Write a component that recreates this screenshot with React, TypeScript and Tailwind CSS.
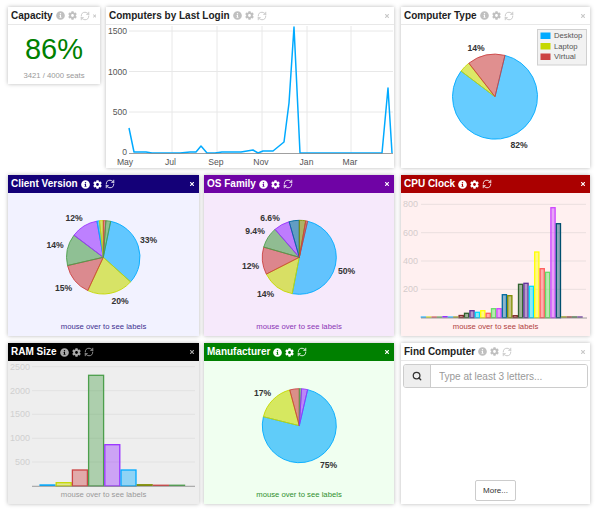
import type { ReactNode } from "react";
import { FaInfoCircle, FaCog, FaTimes } from "react-icons/fa";
import { RefreshCw, Search } from "lucide-react";

const BLUE = "#00aaff", LIME = "#c5d800", RED = "#cc4444", GREEN = "#4c9f4c", PURPLE = "#9933ff";
const DBLUE = "#006a9f", OLIVE = "#7f8c00", DRED = "#802b2b", DGREEN = "#2f632f", DPURPLE = "#5f2f99";
const CYAN = "#00ddff", YELLOW = "#ffff00", PINK = "#ff5c5c", LGREEN = "#66dd66", BPURPLE = "#cc44ff", TEAL = "#004f6f";

function Card({ title, header, iconClass, closeClass, bodyBg, className, children }: {
  title: string; header: string; iconClass: string; closeClass: string; bodyBg: string; className: string; children: ReactNode;
}) {
  return (
    <div className={`flex flex-col shadow-[0_0_4px_rgba(0,0,0,0.28)] ${bodyBg} ${className}`}>
      <div className={`h-[18px] shrink-0 flex items-center pl-[3px] pr-[4px] gap-[3px] ${header}`}>
        <span className="text-[10px] font-bold whitespace-nowrap leading-none">{title}</span>
        <span className={`flex items-center gap-[3px] ${iconClass}`}>
          <FaInfoCircle className="w-[9px] h-[9px]" />
          <FaCog className="w-[9px] h-[9px]" />
          <RefreshCw className="w-[10px] h-[10px]" strokeWidth={2} />
        </span>
        <FaTimes className={`ml-auto w-[6px] h-[6px] ${closeClass}`} />
      </div>
      {children}
    </div>
  );
}

const LIGHT = "bg-white text-[#222] border-b border-[#e8e8e8]";
const LIGHT_ICON = "text-[#c0c0c0]";
const LIGHT_X = "text-[#c8c8c8]";

function pt(cx: number, cy: number, r: number, deg: number) {
  const a = ((deg - 90) * Math.PI) / 180;
  return [cx + r * Math.cos(a), cy + r * Math.sin(a)];
}

function Pie({ cx, cy, r, start, slices, labels }: {
  cx: number; cy: number; r: number; start: number;
  slices: [string, number][]; labels: [string, number, number][];
}) {
  let from = start;
  return (
    <>
      {slices.map(([c, to], i) => {
        const [x1, y1] = pt(cx, cy, r, from);
        const [x2, y2] = pt(cx, cy, r, to);
        const large = to - from > 180 ? 1 : 0;
        const d = `M${cx} ${cy}L${x1} ${y1}A${r} ${r} 0 ${large} 1 ${x2} ${y2}Z`;
        from = to;
        return <path key={i} d={d} fill={c} fillOpacity={0.6} stroke={c} strokeWidth={0.9} strokeLinejoin="round" />;
      })}
      {labels.map(([t, x, y]) => (
        <text key={t} x={x} y={y} fontSize={8.6} fontWeight={700} fill="#333" textAnchor="middle" dominantBaseline="central">{t}</text>
      ))}
    </>
  );
}

function Bars({ x0, w, base, bars, opacity }: { x0: number; w: number; base: number; bars: [string, number][]; opacity: number }) {
  return (
    <>
      {bars.map(([c, top], i) => (
        base - top < 2 ? (
          <rect key={i} x={x0 + i * w} y={top} width={w} height={base - top} fill={c} />
        ) : (
          <rect key={i} x={x0 + i * w + 0.6} y={top} width={w - 1.2} height={base - top} fill={c} fillOpacity={opacity} stroke={c} strokeWidth={1.3} />
        )
      ))}
    </>
  );
}

function Footer({ className, children }: { className: string; children: string }) {
  return <div className={`text-[7.7px] leading-[10px] text-center ${className}`}>{children}</div>;
}

const linePts = "129,128 134,152 140,152 146,152 152,153 160,153 170,153 180,153 190,152 196,152 201,146 207,153 215,153 222,152 232,152 241,152 253,150 258,153 263,151 273,151 284,142 289,103 294,27 300,153 382,153 388,88 392,153";

const cpu: [string, number][] = [
  [BLUE, 316.5], [LIME, 316.5], [RED, 316.5], [GREEN, 316.5], [PURPLE, 316], [BLUE, 316.5], [OLIVE, 316.5],
  [DRED, 315.5], [DGREEN, 313.3], [DPURPLE, 310.7], [CYAN, 312.3], [YELLOW, 310.7], [PINK, 313.3], [LGREEN, 308.7], [BPURPLE, 308.7],
  [DBLUE, 294.7], [OLIVE, 295.7], [DRED, 315.7], [DGREEN, 284.3], [DPURPLE, 283.3], [CYAN, 286.3], [YELLOW, 252], [PINK, 268.7], [LGREEN, 272.3], [BPURPLE, 207.7], [TEAL, 223.7],
  [OLIVE, 316.4], [DRED, 316.4], [DGREEN, 316.4], [DPURPLE, 316.4],
];

const ram: [string, number][] = [
  [BLUE, 484.3], [LIME, 482.7], [RED, 470], [GREEN, 375.3], [PURPLE, 444.7], [BLUE, 470], [OLIVE, 484.1], [RED, 484.6], [GREEN, 484.6],
];

export default function App() {
  return (
    <div className="w-[599px] h-[510px] bg-white pl-[8px] pt-[7px] flex flex-col gap-[7px] overflow-hidden [font-family:'Liberation_Sans',Arial,sans-serif]">
      {/* Row 1 */}
      <div className="flex items-start h-[161px]">
        <Card title="Capacity" header={LIGHT} iconClass={LIGHT_ICON} closeClass={LIGHT_X} bodyBg="bg-white" className="w-[92px] h-[77px] mr-[6px]">
          <div className="flex flex-col items-center">
            <div className="text-[29px] leading-[33px] mt-[8px] text-[#008000]">86%</div>
            <div className="text-[7.7px] leading-[10px] mt-[5px] text-[#999]">3421 / 4000 seats</div>
          </div>
        </Card>
        <Card title="Computers by Last Login" header={LIGHT} iconClass={LIGHT_ICON} closeClass={LIGHT_X} bodyBg="bg-white" className="w-[288px] h-[161px] mr-[7px]">
          <svg className="block" width={288} height={143} viewBox="106 25 288 143">
            {[31, 71.5, 112].map((y) => <line key={y} x1={129} x2={393} y1={y} y2={y} stroke="#e8e8e8" strokeWidth={1} />)}
            {[172, 217, 262, 307, 351].map((x) => <line key={x} x1={x} x2={x} y1={26} y2={153} stroke="#e8e8e8" strokeWidth={1} />)}
            <polyline points={linePts} fill="none" stroke={BLUE} strokeWidth={1.5} strokeLinejoin="round" />
            <line x1={129} x2={393} y1={153.5} y2={153.5} stroke="#888" strokeWidth={0.8} />
            {([["1500", 31], ["1000", 71.5], ["500", 112], ["0", 152]] as [string, number][]).map(([t, y]) => (
              <text key={t} x={127} y={y} fontSize={8.6} fill="#555" textAnchor="end" dominantBaseline="central">{t}</text>
            ))}
            {([["May", 125], ["Jul", 170.5], ["Sep", 216], ["Nov", 261], ["Jan", 306.5], ["Mar", 350]] as [string, number][]).map(([t, x]) => (
              <text key={t} x={x} y={162} fontSize={8.6} fill="#555" textAnchor="middle" dominantBaseline="central">{t}</text>
            ))}
          </svg>
        </Card>
        <Card title="Computer Type" header={LIGHT} iconClass={LIGHT_ICON} closeClass={LIGHT_X} bodyBg="bg-white" className="w-[189px] h-[161px]">
          <svg className="block" width={189} height={143} viewBox="401 25 189 143">
            <Pie cx={495} cy={96.7} r={42.5} start={13.6}
              slices={[[BLUE, 307], [LIME, 322], [RED, 373.6]]}
              labels={[["14%", 476, 48], ["82%", 519, 144.5]]} />
            <rect x={537.5} y={29.5} width={49} height={35.5} fill="#f2f2f2" stroke="#d0d0d0" strokeWidth={1} />
            {([["Desktop", BLUE, 35.5], ["Laptop", LIME, 46], ["Virtual", RED, 56.5]] as [string, string, number][]).map(([t, c, y]) => (
              <g key={t}>
                <rect x={540.5} y={y - 3} width={10} height={6.5} fill={c} />
                <text x={554} y={y} fontSize={7.7} fill="#555" dominantBaseline="central">{t}</text>
              </g>
            ))}
          </svg>
        </Card>
      </div>

      {/* Row 2 */}
      <div className="flex items-start h-[161px]">
        <Card title="Client Version" header="bg-[#140078] text-white" iconClass="text-white" closeClass="text-white" bodyBg="bg-[#f2f2ff]" className="w-[191px] h-[161px] mr-[5px]">
          <svg className="block" width={191} height={129} viewBox="8 193 191 129">
            <Pie cx={103.3} cy={257.3} r={36.7} start={11.6}
              slices={[[BLUE, 132], [LIME, 205], [RED, 257], [GREEN, 307], [PURPLE, 350], [BLUE, 354], [LIME, 360], [RED, 364], [GREEN, 371.6]]}
              labels={[["33%", 148.5, 240], ["20%", 120, 301], ["15%", 63.5, 288], ["14%", 55, 244.5], ["12%", 74, 218]]} />
          </svg>
          <Footer className="text-[#3d2f8f]">mouse over to see labels</Footer>
        </Card>
        <Card title="OS Family" header="bg-[#6f03a5] text-white" iconClass="text-white" closeClass="text-white" bodyBg="bg-[#f6e9fb]" className="w-[190px] h-[161px] mr-[7px]">
          <svg className="block" width={190} height={129} viewBox="204 193 190 129">
            <Pie cx={299.3} cy={257.3} r={37} start={13}
              slices={[[BLUE, 191], [LIME, 243], [RED, 286], [GREEN, 319], [PURPLE, 344], [DBLUE, 360], [OLIVE, 370], [RED, 373]]}
              labels={[["50%", 346.5, 271], ["14%", 265.5, 294], ["12%", 250.5, 266], ["9.4%", 255, 231], ["6.6%", 270, 217.5]]} />
          </svg>
          <Footer className="text-[#8a35b5]">mouse over to see labels</Footer>
        </Card>
        <Card title="CPU Clock" header="bg-[#aa0000] text-white" iconClass="text-white" closeClass="text-white" bodyBg="bg-[#fff0f0]" className="w-[189px] h-[161px]">
          <svg className="block" width={189} height={129} viewBox="401 193 189 129">
            {[204.3, 232.7, 261, 289.3].map((y) => <line key={y} x1={421} x2={586} y1={y} y2={y} stroke="#eadfdf" strokeWidth={1} />)}
            <Bars x0={420.7} w={5.4} base={317.7} bars={cpu} opacity={0.45} />
            <line x1={421} x2={587} y1={318} y2={318} stroke="#888" strokeWidth={0.8} />
            {([["800", 204.3], ["600", 232.7], ["400", 261], ["200", 289.3]] as [string, number][]).map(([t, y]) => (
              <text key={t} x={418} y={y} fontSize={9} fill="#d4cccc" textAnchor="end" dominantBaseline="central">{t}</text>
            ))}
          </svg>
          <Footer className="text-[#b04040]">mouse over to see labels</Footer>
        </Card>
      </div>

      {/* Row 3 */}
      <div className="flex items-start h-[161px]">
        <Card title="RAM Size" header="bg-black text-white" iconClass="text-[#aaa]" closeClass="text-[#aaa]" bodyBg="bg-[#eeeeee]" className="w-[191px] h-[161px] mr-[5px]">
          <svg className="block" width={191} height={129} viewBox="8 361 191 129">
            {[366.7, 390.7, 414.3, 438.3, 462].map((y) => <line key={y} x1={32} x2={195} y1={y} y2={y} stroke="#e2e2e2" strokeWidth={1} />)}
            <Bars x0={39.4} w={16.2} base={486} bars={ram} opacity={0.4} />
            <line x1={32} x2={195} y1={486.3} y2={486.3} stroke="#888" strokeWidth={0.8} />
            {([["2500", 366.7], ["2000", 390.7], ["1500", 414.3], ["1000", 438.3], ["500", 462]] as [string, number][]).map(([t, y]) => (
              <text key={t} x={30} y={y} fontSize={9} fill="#d0d0d0" textAnchor="end" dominantBaseline="central">{t}</text>
            ))}
          </svg>
          <Footer className="text-[#999]">mouse over to see labels</Footer>
        </Card>
        <Card title="Manufacturer" header="bg-[#008000] text-white" iconClass="text-white" closeClass="text-white" bodyBg="bg-[#f0fff0]" className="w-[190px] h-[161px] mr-[7px]">
          <svg className="block" width={190} height={129} viewBox="204 361 190 129">
            <Pie cx={299.3} cy={425.7} r={37} start={13}
              slices={[[BLUE, 284], [LIME, 345], [RED, 360], [GREEN, 363.5], [PURPLE, 373]]}
              labels={[["17%", 262.5, 392.5], ["75%", 328.5, 464.5]]} />
          </svg>
          <Footer className="text-[#2f8f2f]">mouse over to see labels</Footer>
        </Card>
        <Card title="Find Computer" header={LIGHT} iconClass={LIGHT_ICON} closeClass={LIGHT_X} bodyBg="bg-white" className="w-[189px] h-[161px]">
          <div className="flex-1 flex flex-col justify-between pt-[3px] pb-[3px] px-[2px]">
            <div className="flex h-[24px] border border-[#ccc] rounded-[3px] overflow-hidden">
              <div className="w-[27px] bg-[#eeeeee] border-r border-[#ccc] flex items-center justify-center">
                <Search className="w-[10px] h-[10px] text-[#333]" strokeWidth={3} />
              </div>
              <input placeholder="Type at least 3 letters..." className="flex-1 min-w-0 pl-[8px] text-[10px] bg-white outline-none placeholder:text-[#999]" />
            </div>
            <button className="self-center w-[41px] h-[21px] border border-[#ccc] rounded-[2px] bg-white text-[8px] text-[#333]">More...</button>
          </div>
        </Card>
      </div>
    </div>
  );
}
